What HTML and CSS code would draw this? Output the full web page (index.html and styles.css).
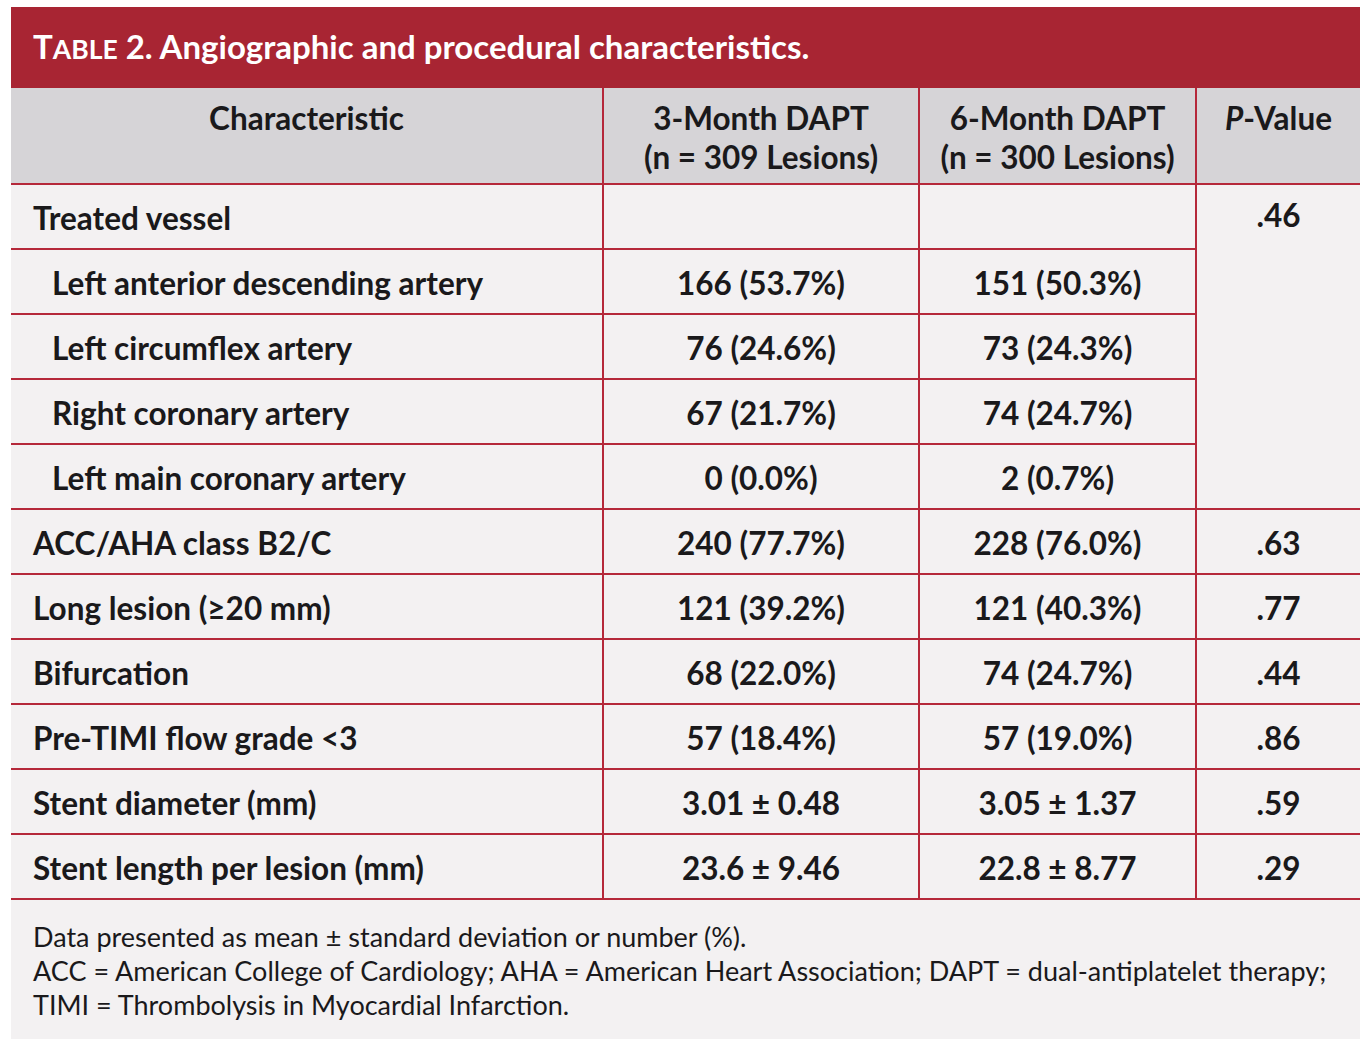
FILE: index.html
```html
<!DOCTYPE html>
<html>
<head>
<meta charset="utf-8">
<link rel="stylesheet" href="styles.css">
</head>
<body>
<div class="wrap">
  <div class="title"><span class="tb">T<span class="sc">ABLE</span> 2.</span> Angiographic and procedural characteristics.</div>
  <table class="tbl">
    <colgroup>
      <col class="c1"><col class="c2"><col class="c3"><col class="c4">
    </colgroup>
    <thead>
      <tr>
        <th>Characteristic</th>
        <th>3-Month DAPT<br>(n = 309 Lesions)</th>
        <th>6-Month DAPT<br>(n = 300 Lesions)</th>
        <th><i>P</i>-Value</th>
      </tr>
    </thead>
    <tbody>
      <tr><td class="lab">Treated vessel</td><td></td><td></td><td class="pv" rowspan="5">.46</td></tr>
      <tr><td class="lab sub">Left anterior descending artery</td><td>166 (53.7%)</td><td>151 (50.3%)</td></tr>
      <tr><td class="lab sub">Left circumflex artery</td><td>76 (24.6%)</td><td>73 (24.3%)</td></tr>
      <tr><td class="lab sub">Right coronary artery</td><td>67 (21.7%)</td><td>74 (24.7%)</td></tr>
      <tr><td class="lab sub">Left main coronary artery</td><td>0 (0.0%)</td><td>2 (0.7%)</td></tr>
      <tr><td class="lab">ACC/AHA class B2/C</td><td>240 (77.7%)</td><td>228 (76.0%)</td><td>.63</td></tr>
      <tr><td class="lab">Long lesion (≥20 mm)</td><td>121 (39.2%)</td><td>121 (40.3%)</td><td>.77</td></tr>
      <tr><td class="lab">Bifurcation</td><td>68 (22.0%)</td><td>74 (24.7%)</td><td>.44</td></tr>
      <tr><td class="lab">Pre-TIMI flow grade &lt;3</td><td>57 (18.4%)</td><td>57 (19.0%)</td><td>.86</td></tr>
      <tr><td class="lab">Stent diameter (mm)</td><td>3.01 ± 0.48</td><td>3.05 ± 1.37</td><td>.59</td></tr>
      <tr><td class="lab">Stent length per lesion (mm)</td><td>23.6 ± 9.46</td><td>22.8 ± 8.77</td><td>.29</td></tr>
    </tbody>
  </table>
  <div class="foot">
    <p>Data presented as mean ± standard deviation or number (%).</p>
    <p>ACC = American College of Cardiology; AHA = American Heart Association; DAPT = dual-antiplatelet therapy;</p>
    <p>TIMI = Thrombolysis in Myocardial Infarction.</p>
  </div>
</div>
</body>
</html>
```
FILE: styles.css
```css
html, body {
  margin: 0;
  padding: 0;
  background: #ffffff;
}
body {
  font-family: "Lato", "Open Sans", sans-serif;
  color: #1a191b;
}
.wrap {
  margin: 7px 0 0 11px;
  width: 1349px;
  background: #f3f1f2;
}
.title {
  background: #a82533;
  color: #ffffff;
  height: 81px;
  box-sizing: border-box;
  padding: 0 0 4px 22px;
  display: flex;
  align-items: center;
  font-size: 33px;
  font-weight: 700;
  white-space: pre;
}
.title .sc { font-size: 26.5px; }
.tbl {
  width: 1349px;
  border-collapse: collapse;
  table-layout: fixed;
}
.c1 { width: 592px; }
.c2 { width: 316px; }
.c3 { width: 277px; }
.c4 { width: 164px; }
.tbl th {
  background: #d6d4d7;
  font-size: 31.5px;
  font-weight: 700;
  line-height: 39px;
  height: 96px;
  box-sizing: border-box;
  padding: 11px 0 0 0;
  vertical-align: top;
  text-align: center;
  border-left: 2px solid #b5283a;
  border-bottom: 2px solid #b5283a;
}
.tbl th:first-child { border-left: none; }
.tbl td {
  height: 65px;
  box-sizing: border-box;
  font-size: 31.5px;
  font-weight: 700;
  line-height: 38px;
  text-align: center;
  vertical-align: middle;
  padding: 3px 0 0 0;
  border-left: 2px solid #b5283a;
  border-bottom: 2px solid #b5283a;
}
.tbl td.lab {
  text-align: left;
  padding-left: 22px;
  border-left: none;
}
.tbl td.sub { padding-left: 41px; }
.tbl td.pv {
  vertical-align: top;
  padding-top: 11px;
}
.foot {
  padding: 20px 22px 20px 22px;
  height: 139px;
  box-sizing: border-box;
  font-size: 27px;
  line-height: 34px;
}
.foot p { margin: 0; }
```
